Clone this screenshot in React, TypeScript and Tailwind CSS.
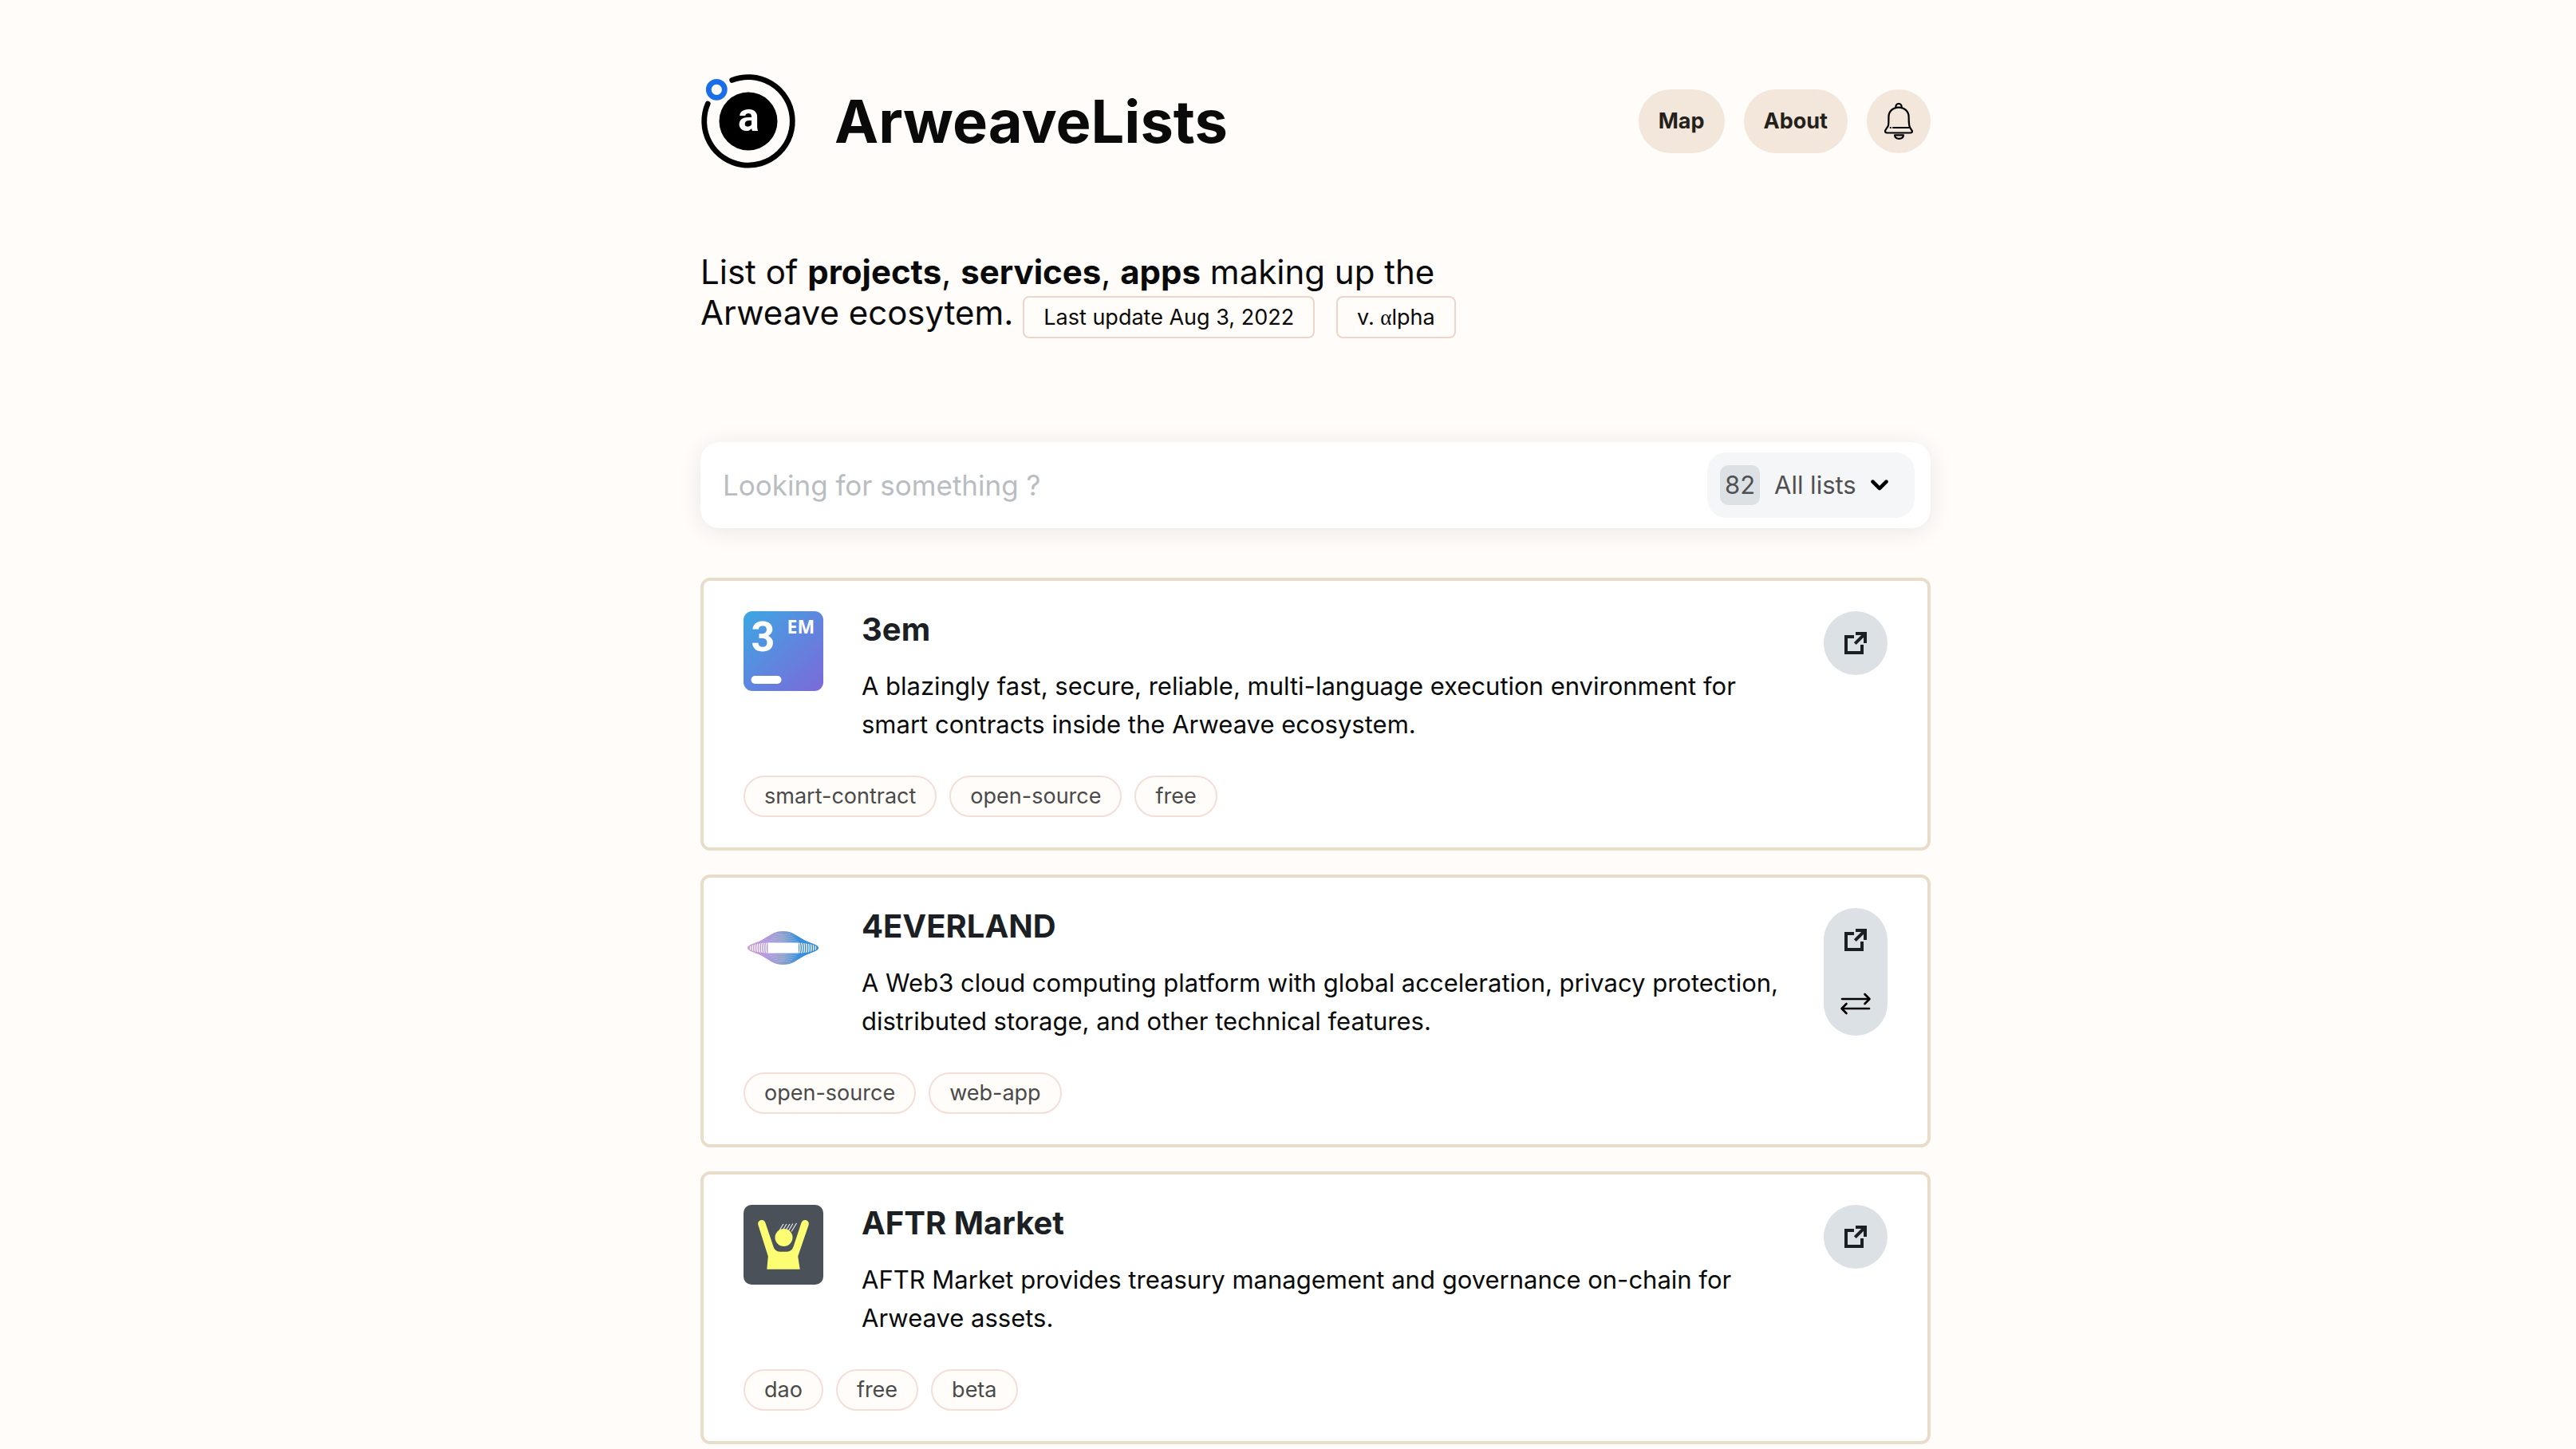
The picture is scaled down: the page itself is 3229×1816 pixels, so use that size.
import React from "react";

type Project = {
  name: string;
  description: string;
  tags: string[];
  logo: React.ReactNode;
  swap?: boolean;
};

function BrandLogo() {
  return (
    <svg viewBox="0 0 120 120" className="size-[120px] shrink-0" aria-hidden="true">
      <path d="M39.7 8.4A55.3 55.3 0 1 1 9.2 38" fill="none" stroke="#000" strokeWidth="6.8" strokeLinecap="round" />
      <circle cx="60" cy="60" r="36.5" />
      <circle cx="20.3" cy="20.3" r="10" fill="none" stroke="#1a6fe8" strokeWidth="6.8" />
      <text x="60.5" y="72" textAnchor="middle" fill="#fff" fontFamily="Roboto, sans-serif" fontWeight="700" fontSize="50">
        a
      </text>
    </svg>
  );
}

function BellIcon() {
  return (
    <svg viewBox="0 0 38 46" className="h-[46px] w-[38px]" fill="none" stroke="#000" strokeWidth="2.2" strokeLinecap="round" strokeLinejoin="round" aria-hidden="true">
      <path d="M15.4 6.2V4.6a3.6 3.6 0 0 1 7.2 0v1.6" />
      <path d="M6 28c-.4 2.7-4 5-4 7.600 0 1.200 1 1.900 2.400 1.900h29.200c1.400 0 2.400-.7 2.400-1.900 0-1.600-3.200-3.300-3.800-7.600-.5-3-.6-6-.6-10.400C31.600 10.400 26 5.600 19 5.600S6.400 10.400 6.400 17.600C6.400 22 6.500 25 6 28z" />
      <path d="M12 31h21" />
      <path d="M8.700 31h.2" />
      <path d="M14 40.300h11c0 2.700-2.300 4.500-5.500 4.500S14 43 14 40.300z" />
    </svg>
  );
}

function ExternalIcon() {
  return (
    <svg viewBox="0 0 28 28" className="size-7" fill="none" stroke="#1c1f23" strokeWidth="4" aria-hidden="true">
      <path d="M12 6H2v20h20V16" />
      <path d="M14 2h12v12" />
      <path d="M26 2 13.300 14.700" />
    </svg>
  );
}

function SwapIcon() {
  return (
    <svg viewBox="0 0 40 28" className="h-7 w-10" fill="none" stroke="#000" strokeWidth="2.600" strokeLinecap="round" strokeLinejoin="round" aria-hidden="true">
      <path d="M3 8h34M31.500 2 37.500 8l-6 6" />
      <path d="M37 20H3M8.500 14l-6 6 6 6" />
    </svg>
  );
}

function ThreeEmLogo() {
  return (
    <svg viewBox="0 0 100 100" className="size-[100px] overflow-visible" aria-hidden="true">
      <defs>
        <linearGradient id="em-bg" x1="0" y1="0" x2="1" y2="1">
          <stop offset="0" stopColor="#3ba8e3" />
          <stop offset="0.45" stopColor="#5b8adf" />
          <stop offset="1" stopColor="#7b69d8" />
        </linearGradient>
      </defs>
      <rect width="100" height="100" rx="11" fill="url(#em-bg)" />
      <g fill="#fff" fontWeight="700">
        <text x="9.500" y="49.500" fontSize="52" fontFamily="Roboto, sans-serif">3</text>
        <text x="54.500" y="28" fontSize="23" fontFamily="Noto Sans, sans-serif">EM</text>
      </g>
      <rect x="9.500" y="81" width="38" height="10" rx="5" fill="#fff" />
    </svg>
  );
}

const ribs = [0, 2.800, 5.600, 8.400, 11.200, 14, 16.800, 19.600];
const bands = [0, 2.500, 5, 7.500, 10];

function EverlandLogo() {
  return (
    <svg viewBox="0 0 100 100" className="size-[100px]" aria-hidden="true">
      <defs>
        <linearGradient id="ever-bg" x1="0" y1="0" x2="1" y2="0">
          <stop offset="0" stopColor="#d39acb" />
          <stop offset="0.25" stopColor="#b79be0" />
          <stop offset="0.5" stopColor="#8b9fcb" />
          <stop offset="0.72" stopColor="#3b8fdc" />
          <stop offset="1" stopColor="#3289d3" />
        </linearGradient>
        <clipPath id="ever-sides">
          <path d="M6 50C6 47 20 43.500 30.500 43.500v13C20 56.500 6 53 6 50zM93 50C93 47 80 43.500 69 43.500v13C80 56.500 93 53 93 50z" />
        </clipPath>
      </defs>
      <path
        d="M5 50C5 46 14 44.500 22 40.500 32 35.500 37 29 49.500 29S67 35.500 77 40.500C85 44.500 94 46 94 50S85 55.500 77 59.500C67 64.500 62 71 49.500 71S32 64.500 22 59.500C14 55.500 5 54 5 50z"
        fill="url(#ever-bg)"
      />
      <rect x="30.500" y="43.500" width="38.500" height="13" rx="1" fill="#fff" />
      <g clipPath="url(#ever-sides)" fill="none" stroke="#fff" strokeWidth="1.300">
        {ribs.map((r) => (
          <g key={r}>
            <path d={`M${10 + r} 42q-3 8 0 16`} />
            <path d={`M${89 - r} 42q3 8 0 16`} />
          </g>
        ))}
      </g>
      <g fill="none" stroke="#fff" strokeWidth="0.500" opacity="0.450">
        {bands.map((b) => (
          <g key={b}>
            <path d={`M${40 - b} ${32.500 + b}q9.500 3 ${19 + 2 * b} 0`} />
            <path d={`M${40 - b} ${67.500 - b}q9.500 -3 ${19 + 2 * b} 0`} />
          </g>
        ))}
      </g>
    </svg>
  );
}

function AftrLogo() {
  return (
    <svg viewBox="0 0 100 100" className="size-[100px]" aria-hidden="true">
      <rect width="100" height="100" rx="10" fill="#4a5158" />
      <path
        d="M18.300 25C17 18.500 26 16.500 27.600 23L37 51c1.300 5 4.500 7.700 8.500 7.700h9c4 0 7.200-2.700 8.500-7.700l9.300-28C74 16.500 83 18.500 81.700 25L68.200 64.500l2.500 16.300H29.300l1.500-16.300z"
        fill="#fdfd74"
      />
      <g stroke="#e9ebec" strokeWidth="1.200">
        <path d="M45 32l5-8M49 32l5-8M53 32l5-8M56.500 32.500l5.500-9M60 33.500l6.500-10.500" />
      </g>
      <circle cx="50.500" cy="41" r="11" fill="#fdfd74" />
    </svg>
  );
}

const projects: Project[] = [
  {
    name: "3em",
    description:
      "A blazingly fast, secure, reliable, multi-language execution environment for smart contracts inside the Arweave ecosystem.",
    tags: ["smart-contract", "open-source", "free"],
    logo: <ThreeEmLogo />,
  },
  {
    name: "4EVERLAND",
    description:
      "A Web3 cloud computing platform with global acceleration, privacy protection, distributed storage, and other technical features.",
    tags: ["open-source", "web-app"],
    logo: <EverlandLogo />,
    swap: true,
  },
  {
    name: "AFTR Market",
    description: "AFTR Market provides treasury management and governance on-chain for Arweave assets.",
    tags: ["dao", "free", "beta"],
    logo: <AftrLogo />,
  },
];

function ProjectCard({ project }: { project: Project }) {
  return (
    <li className="flex flex-col gap-10 rounded-xl border-4 border-[#e8dccb] bg-white px-[50px] py-[38px]">
      <div className="flex items-start">
        <div className="shrink-0">{project.logo}</div>
        <div className="ml-12 flex min-w-0 flex-1 flex-col gap-6">
          <h2 className="text-[40px] leading-[46px] font-bold text-[#1c1f23]">{project.name}</h2>
          <p className="text-[31px] leading-[48px]">{project.description}</p>
        </div>
        <div className="ml-10 flex w-20 shrink-0 flex-col rounded-full bg-[#dce1e6]">
          <a href="#visit" aria-label={`Open ${project.name}`} className="flex h-20 items-center justify-center">
            <ExternalIcon />
          </a>
          {project.swap && (
            <button type="button" aria-label={`Alternatives to ${project.name}`} className="flex h-20 items-center justify-center">
              <SwapIcon />
            </button>
          )}
        </div>
      </div>
      <ul className="flex flex-wrap gap-4">
        {project.tags.map((tag) => (
          <li key={tag} className="rounded-full border-2 border-[#f3dfd8] bg-[#fffcf9] px-6 py-2 text-[27px] leading-8 text-[#4a4a4a]">
            {tag}
          </li>
        ))}
      </ul>
    </li>
  );
}

export default function App() {
  return (
    <div className="min-h-screen bg-[#fffcf9] pl-[69px] font-['Inter',sans-serif] text-[#0a0a0a]">
      <div className="mx-auto w-full max-w-[1542px] pt-[92px]">
        <header className="flex items-center">
          <BrandLogo />
          <h1 className="ml-12 text-[74px] leading-[90px] font-bold">ArweaveLists</h1>
          <nav className="ml-auto flex gap-6 text-[27px] leading-8 font-bold text-[#24211d]">
            <a href="#map" className="flex h-20 items-center rounded-full bg-[#f2e7da] px-[25px]">
              Map
            </a>
            <a href="#about" className="flex h-20 items-center rounded-full bg-[#f2e7da] px-[25px]">
              About
            </a>
            <button type="button" aria-label="Notifications" className="flex size-20 items-center justify-center rounded-full bg-[#f2e7da]">
              <BellIcon />
            </button>
          </nav>
        </header>

        <p className="mt-[103px] max-w-[960px] text-[42px] leading-[51px]">
          List of <strong className="font-bold">projects</strong>, <strong className="font-bold">services</strong>,{" "}
          <strong className="font-bold">apps</strong> making up the Arweave ecosytem.{" "}
          <span className="mr-[15px] rounded-lg border-2 border-[#edd6c7] px-6 py-2 text-[27px] leading-8 whitespace-nowrap">
            Last update Aug 3, 2022
          </span>{" "}
          <span className="rounded-lg border-2 border-[#edd6c7] px-6 py-2 text-[27px] leading-8 whitespace-nowrap">
            v. <span className="font-['Liberation_Serif',serif]">α</span>lpha
          </span>
        </p>

        <form className="mt-[137px] flex h-[108px] items-center rounded-3xl bg-white pr-5 pl-7 shadow-[0_4px_30px_rgba(0,0,0,0.09)]">
          <input
            type="search"
            aria-label="Search projects"
            placeholder="Looking for something ?"
            className="min-w-0 flex-1 bg-transparent text-[35px] leading-[48px] outline-none placeholder:text-[#b9bdc2]"
          />
          <div className="relative flex h-[82px] w-[260px] items-center rounded-3xl bg-[#f4f6f8] pl-4 text-[31px] leading-[50px] text-[#505050]">
            <span className="flex size-[50px] items-center justify-center rounded-[10px] bg-[#dce1e6]">82</span>
            <select aria-label="Filter by list" className="h-full min-w-0 flex-1 appearance-none bg-transparent pl-[18px] outline-none">
              <option>All lists</option>
            </select>
            <svg viewBox="0 0 22 14" className="pointer-events-none absolute right-[33px] h-[14px] w-[22px]" fill="none" stroke="#000" strokeWidth="4.500" strokeLinecap="round" strokeLinejoin="round" aria-hidden="true">
              <path d="M2.500 2.700 11 11.200l8.500-8.500" />
            </svg>
          </div>
        </form>

        <ul className="mt-[62px] flex flex-col gap-[30px]">
          {projects.map((project) => (
            <ProjectCard key={project.name} project={project} />
          ))}
        </ul>
      </div>
    </div>
  );
}
